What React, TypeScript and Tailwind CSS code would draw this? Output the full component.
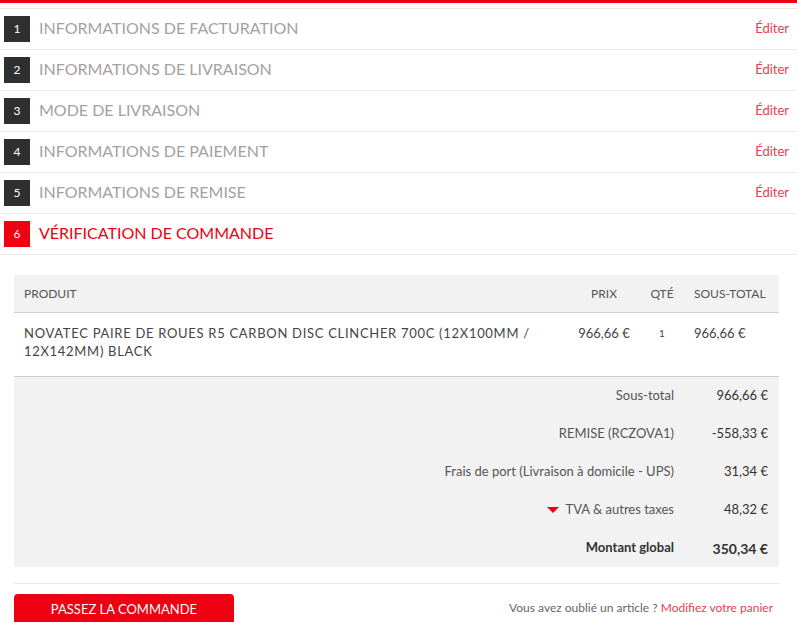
import React from "react";

const steps = [
  { n: 1, title: "INFORMATIONS DE FACTURATION" },
  { n: 2, title: "INFORMATIONS DE LIVRAISON" },
  { n: 3, title: "MODE DE LIVRAISON" },
  { n: 4, title: "INFORMATIONS DE PAIEMENT" },
  { n: 5, title: "INFORMATIONS DE REMISE" },
];

const totals = [
  { label: "Sous-total", value: "966,66 €" },
  { label: "REMISE (RCZOVA1)", value: "-558,33 €" },
  { label: "Frais de port (Livraison à domicile - UPS)", value: "31,34 €" },
  { label: "TVA & autres taxes", value: "48,32 €", tax: true },
];

function StepRow({ n, title, active }: { n: number; title: string; active?: boolean }) {
  return (
    <div className="flex items-center h-[41px] border-b border-[#e8e8e8] pl-[4px] pr-[8px]">
      <div
        className={
          "w-[26px] h-[26px] flex items-center justify-center text-white text-[12px] " +
          (active ? "bg-[#ee0011]" : "bg-[#2f2f2f]")
        }
      >
        {n}
      </div>
      <div
        className={
          "ml-[9px] text-[16px] -mt-[2px] " + (active ? "text-[#ee0011]" : "text-[#a5a1a1]")
        }
      >
        {title}
      </div>
      {!active && <a className="ml-auto text-[13px] text-[#e8404f]">Éditer</a>}
    </div>
  );
}

export default function App() {
  return (
    <div className="w-[797px] h-[622px] overflow-hidden bg-white" style={{ fontFamily: "Lato, 'Open Sans', sans-serif" }}>
      <div className="h-[3px] bg-[#ee0011]" />
      <div className="mt-[5px] border-t border-[#e8e8e8]">
        {steps.map((s) => (
          <StepRow key={s.n} n={s.n} title={s.title} />
        ))}
        <StepRow n={6} title="VÉRIFICATION DE COMMANDE" active />
      </div>

      <div className="ml-[14px] mr-[18px] mt-[20px]">
        <div className="grid grid-cols-[1fr_72px_44px_95px] h-[38px] items-center bg-[#f2f2f2] border-b border-[#cfcfcf] text-[12px] text-[#555]">
          <div className="pl-[10px]">PRODUIT</div>
          <div className="text-center">PRIX</div>
          <div className="text-center">QTÉ</div>
          <div className="pl-[10px]">SOUS-TOTAL</div>
        </div>
        <div className="grid grid-cols-[1fr_72px_44px_95px] h-[64px] pt-[11px] border-b border-[#cfcfcf] text-[13px] text-[#444] leading-[18px]">
          <div className="pl-[10px] pr-[20px] tracking-[0.7px]">
            NOVATEC PAIRE DE ROUES R5 CARBON DISC CLINCHER 700C (12X100MM / 12X142MM) BLACK
          </div>
          <div className="text-center">966,66 €</div>
          <div className="text-center text-[10px]">1</div>
          <div className="pl-[10px]">966,66 €</div>
        </div>
        <div className="bg-[#f2f2f2] text-[13px]">
          {totals.map((t) => (
            <div key={t.label} className="grid grid-cols-[1fr_95px] h-[38px] items-center">
              <div className="flex items-center justify-end pr-[10px] text-[#555]">
                {t.tax && (
                  <span className="mr-[6px] w-0 h-0 border-l-[6px] border-r-[6px] border-t-[6px] border-l-transparent border-r-transparent border-t-[#ee0011]" />
                )}
                {t.label}
              </div>
              <div className="text-right pr-[11px] text-[#333]">{t.value}</div>
            </div>
          ))}
          <div className="grid grid-cols-[1fr_95px] h-[38px] items-center font-bold text-[#333]">
            <div className="text-right pr-[10px]">Montant global</div>
            <div className="text-right pr-[11px] text-[14px]">350,34 €</div>
          </div>
        </div>
        <div className="mt-[16px] border-t border-[#e8e8e8] pt-[10px] flex items-start justify-between">
          <button className="w-[220px] h-[34px] bg-[#ee0011] rounded-t-[4px] text-white text-[13px] pb-[3px]">
            PASSEZ LA COMMANDE
          </button>
          <div className="mt-[5px] mr-[6px] text-[12px] text-[#666]">
            Vous avez oublié un article ? <span className="text-[#e8404f]">Modifiez votre panier</span>
          </div>
        </div>
      </div>
    </div>
  );
}
